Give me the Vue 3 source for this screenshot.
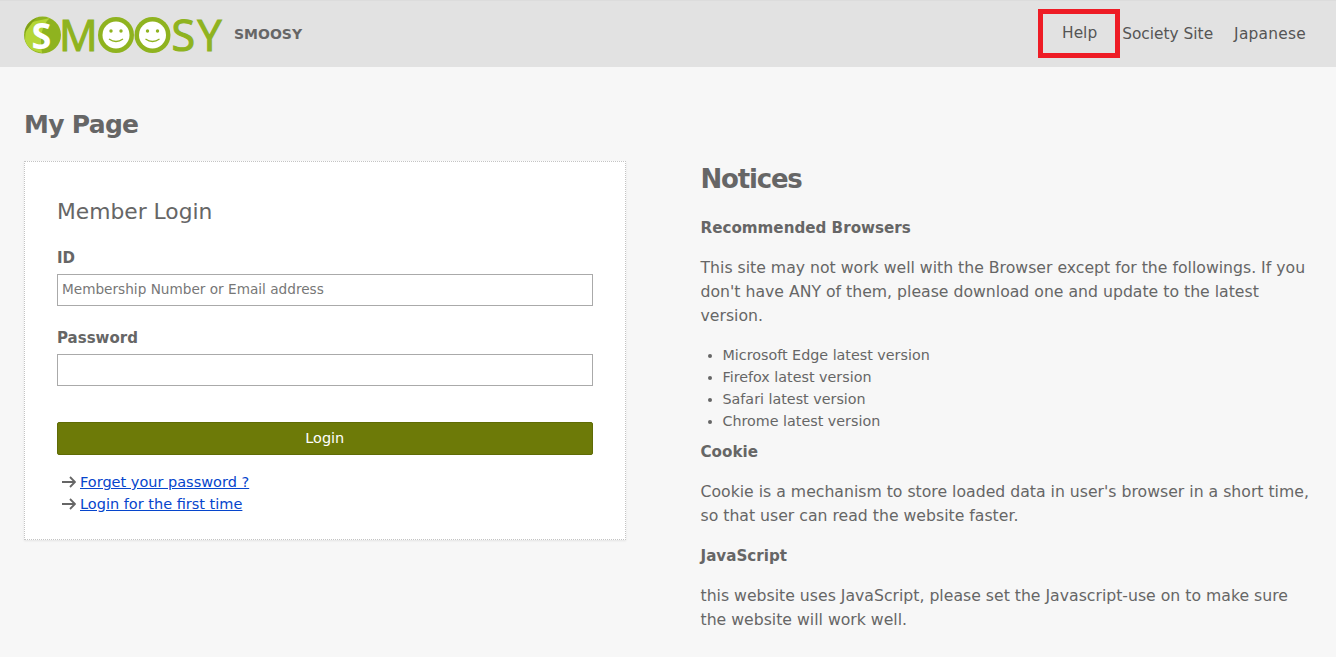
<script setup>
const browsers = ['Microsoft Edge latest version', 'Firefox latest version', 'Safari latest version', 'Chrome latest version']
const links = ['Forget your password ?', 'Login for the first time']
const faces = [93, 129.5]
</script>

<template>
  <div class="page">
    <header class="top">
      <div class="brand">
        <svg class="logo" width="201" height="40" viewBox="0 0 201 40">
          <circle cx="19.500" cy="21" r="18.500" fill="#8fb31f" />
          <path d="M2 26 Q2 14 9 8 L27 4 Q15 14 19 39 Q5 37 2 26Z" fill="#b5d637" />
          <path d="M1.500 19 Q3 8 14 3.500 L9 9Z" fill="#7f9f18" />
          <text x="8.500" y="34.500" class="logo-s">S</text>
          <text x="36" y="37" class="logo-t">M</text>
          <g v-for="x in faces" :key="x">
            <circle :cx="x" cy="21" r="18" fill="#8fb31f" />
            <circle :cx="x" cy="21" r="13.500" fill="#fff" />
            <circle :cx="x - 5" cy="17" r="1.700" fill="#8fb31f" />
            <circle :cx="x + 5" cy="17" r="1.700" fill="#8fb31f" />
            <path :d="`M${x - 7} 25 Q${x} 30 ${x + 7} 25`" fill="none" stroke="#8fb31f" stroke-width="1.300" />
          </g>
          <text x="148.500" y="37" class="logo-t">S</text>
          <text x="174.500" y="37" class="logo-t">Y</text>
        </svg>
        <span class="brand-name">SMOOSY</span>
      </div>
      <nav class="nav">
        <a class="nav-link help">Help</a>
        <a class="nav-link">Society Site</a>
        <a class="nav-link jp">Japanese</a>
      </nav>
    </header>

    <main class="content">
      <section class="left">
        <h1>My Page</h1>
        <div class="card">
          <h2>Member Login</h2>
          <label class="field-label">ID</label>
          <input class="input" placeholder="Membership Number or Email address" />
          <label class="field-label pw">Password</label>
          <input class="input" type="password" />
          <button class="login">Login</button>
          <ul class="links">
            <li v-for="l in links" :key="l">
              <svg class="arrow" width="14" height="12" viewBox="0 0 14 12"><path d="M0 6H13M8 1l5 5-5 5" fill="none" stroke="#666" stroke-width="1.800" /></svg>
              <a>{{ l }}</a>
            </li>
          </ul>
        </div>
      </section>
      <section class="right">
        <h2 class="notices">Notices</h2>
        <h3>Recommended Browsers</h3>
        <p>This site may not work well with the Browser except for the followings. If you don't have ANY of them, please download one and update to the latest version.</p>
        <ul class="browsers">
          <li v-for="b in browsers" :key="b">{{ b }}</li>
        </ul>
        <h3 class="cookie">Cookie</h3>
        <p>Cookie is a mechanism to store loaded data in user's browser in a short time, so that user can read the website faster.</p>
        <h3>JavaScript</h3>
        <p>this website uses JavaScript, please set the Javascript-use on to make sure the website will work well.</p>
      </section>
    </main>
  </div>
</template>

<style>
html, body { margin: 0; background: #f7f7f7; overflow: hidden; }
</style>

<style scoped>
.page { font-family: "DejaVu Sans", Verdana, sans-serif; color: #666; height: 657px; overflow: hidden; background: #f7f7f7; font-size: 14.5px; }
.top { box-sizing: border-box; height: 67px; background: #e2e2e2; border-top: 1px solid #dcdcdc; display: flex; justify-content: space-between; align-items: center; padding: 0 30px 1px 23px; }
.brand { display: flex; align-items: center; gap: 10px; }
.logo { overflow: visible; }
.logo-t { font: 400 43px "Open Sans", sans-serif; fill: #8fb31f; stroke: #8fb31f; stroke-width: 1.200px; }
.logo-s { font: 700 36px "Open Sans", sans-serif; fill: #fff; }
.brand-name { font-weight: 700; font-size: 14px; color: #666; }
.nav { display: flex; align-items: center; }
.nav-link { color: #555; font-size: 15.4px; margin-left: 21px; }
.jp { letter-spacing: 0.25px; }
.help { box-sizing: border-box; width: 82px; height: 49px; border: 5px solid #ee1c25; padding-left: 1px; line-height: 39px; text-align: center; margin: 0 -19px 1px 0; }
.content { display: flex; padding: 0 24px; }
.left { width: 602px; }
.right { margin-left: 75px; width: 612px; line-height: 24px; font-size: 15.7px; }
h1 { font-size: 25px; letter-spacing: -0.7px; line-height: 32px; margin: 42px 0 20px; color: #666; }
.card { box-sizing: border-box; height: 379px; background: #fff; border: 1px dotted #c4c4c4; box-shadow: 0 1px 2px rgba(0,0,0,.08); padding: 34px 32px; }
.card h2 { font-size: 21.8px; font-weight: 400; margin: 0 0 18px; line-height: 32px; }
.field-label { display: block; font-weight: 700; font-size: 15px; line-height: 24px; margin-bottom: 4px; }
.pw { margin-top: 20px; }
.input { display: block; box-sizing: border-box; width: 100%; height: 32px; border: 1px solid #aaa; padding: 0 4px 2px; font: inherit; font-size: 13.65px; background: #fff; }
.input::placeholder { color: #777; }
.login { display: block; width: 100%; height: 33px; margin-top: 36px; padding: 0 0 2px; background: #6d7a08; color: #fff; border: 1px solid #5f6b05; border-radius: 2px; font: inherit; }
.links { list-style: none; margin: 16px 0 0; padding: 0 0 0 5px; line-height: 22px; }
.arrow { margin-right: 4px; vertical-align: -1px; }
.links a { color: #0645cc; text-decoration: underline; }
.notices { font-size: 26px; letter-spacing: -1.2px; line-height: 36px; margin: 94px 0 19px; color: #666; }
h3 { font-size: 15.15px; line-height: 24px; margin: 0 0 16px; color: #666; }
p { margin: 0 0 16px; }
.browsers { margin: 0; padding: 0 0 0 22px; line-height: 22px; font-size: 14.3px; }
.cookie { margin-top: 8px; }
</style>
